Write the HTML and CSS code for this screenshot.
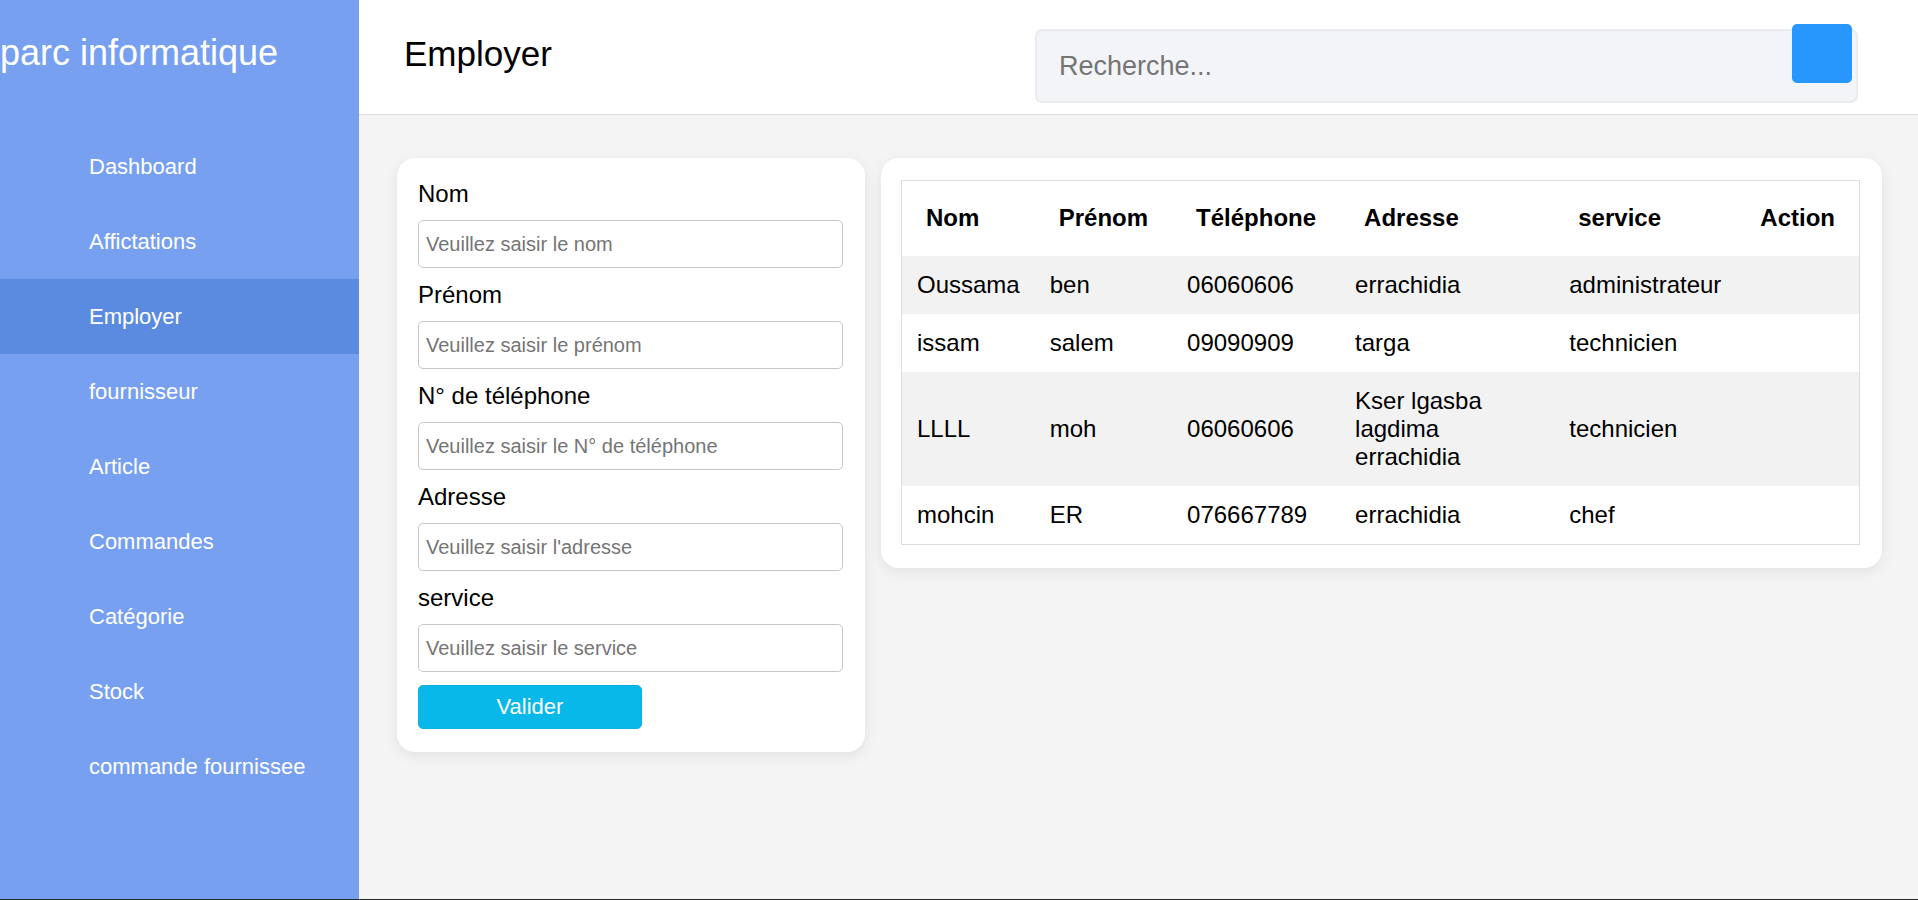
FILE: index.html
```html
<!DOCTYPE html>
<html lang="fr">
<head>
<meta charset="utf-8">
<title>Employer</title>
<link rel="stylesheet" href="styles.css">
</head>
<body>
<div class="app">
  <aside class="sidebar">
    <h1 class="brand">parc informatique</h1>
    <ul class="nav">
      <li><a href="#">Dashboard</a></li>
      <li><a href="#">Affictations</a></li>
      <li class="active"><a href="#">Employer</a></li>
      <li><a href="#">fournisseur</a></li>
      <li><a href="#">Article</a></li>
      <li><a href="#">Commandes</a></li>
      <li><a href="#">Catégorie</a></li>
      <li><a href="#">Stock</a></li>
      <li><a href="#">commande fournissee</a></li>
    </ul>
  </aside>
  <div class="main">
    <header class="topbar">
      <h2 class="page-title">Employer</h2>
      <div class="search">
        <input type="text" class="search-input" placeholder="Recherche...">
        <button class="search-btn" type="button"></button>
      </div>
    </header>
    <div class="content">
      <form class="card form-card">
        <label class="field-label">Nom</label>
        <input class="field-input" type="text" placeholder="Veuillez saisir le nom">
        <label class="field-label">Prénom</label>
        <input class="field-input" type="text" placeholder="Veuillez saisir le prénom">
        <label class="field-label">N° de téléphone</label>
        <input class="field-input" type="text" placeholder="Veuillez saisir le N° de téléphone">
        <label class="field-label">Adresse</label>
        <input class="field-input" type="text" placeholder="Veuillez saisir l'adresse">
        <label class="field-label">service</label>
        <input class="field-input" type="text" placeholder="Veuillez saisir le service">
        <button class="submit-btn" type="button">Valider</button>
      </form>
      <div class="card table-card">
        <table class="emp-table">
          <thead>
            <tr><th>Nom</th><th>Prénom</th><th>Téléphone</th><th>Adresse</th><th>service</th><th>Action</th></tr>
          </thead>
          <tbody>
            <tr><td>Oussama</td><td>ben</td><td>06060606</td><td>errachidia</td><td>administrateur</td><td></td></tr>
            <tr><td>issam</td><td>salem</td><td>09090909</td><td>targa</td><td>technicien</td><td></td></tr>
            <tr><td>LLLL</td><td>moh</td><td>06060606</td><td>Kser lgasba lagdima errachidia</td><td>technicien</td><td></td></tr>
            <tr><td>mohcin</td><td>ER</td><td>076667789</td><td>errachidia</td><td>chef</td><td></td></tr>
          </tbody>
        </table>
      </div>
    </div>
  </div>
</div>
</body>
</html>
```
FILE: styles.css
```css
* { box-sizing: border-box; }
html, body { margin: 0; padding: 0; }
body {
  font-family: "Liberation Sans", Arial, sans-serif;
  color: #000;
  background: #f4f4f4;
  overflow: hidden;
}
.app {
  display: flex;
  height: 900px;
  border-bottom: 1px solid #2a2a2a;
}
.sidebar {
  width: 359px;
  flex: none;
  background: #78a0f0;
  overflow: hidden;
}
.brand {
  margin: 0;
  padding-top: 32px;
  font-size: 36px;
  line-height: 41px;
  font-weight: normal;
  color: #fff;
  white-space: nowrap;
}
.nav {
  list-style: none;
  margin: 56px 0 0;
  padding: 0;
}
.nav li a {
  display: block;
  height: 75px;
  line-height: 75px;
  padding-left: 89px;
  font-size: 22px;
  color: #fff;
  text-decoration: none;
  white-space: nowrap;
}
.nav li.active a { background: #5b8be0; }
.main {
  flex: 1;
  display: flex;
  flex-direction: column;
  min-width: 0;
}
.topbar {
  height: 115px;
  flex: none;
  background: #fff;
  border-bottom: 1px solid #dcdcdc;
  display: flex;
  justify-content: space-between;
  align-items: flex-start;
  padding: 0 60px 0 45px;
}
.page-title {
  margin: 34px 0 0;
  font-size: 35px;
  line-height: 40px;
  font-weight: normal;
}
.search {
  position: relative;
  margin-top: 29px;
  width: 823px;
  height: 74px;
}
.search-input {
  width: 100%;
  height: 100%;
  background: #f3f4f8;
  border: 2px solid #ebecef;
  border-radius: 7px;
  padding: 0 22px;
  font-family: "Liberation Sans", Arial, sans-serif;
  font-size: 27px;
  color: #333;
  outline: none;
}
.search-input::placeholder { color: #757575; }
.search-btn {
  position: absolute;
  right: 6px;
  top: -5px;
  width: 60px;
  height: 59px;
  border: none;
  border-radius: 5px;
  background: #2797fe;
  padding: 0;
}
.content {
  flex: 1;
  display: flex;
  align-items: flex-start;
  gap: 16px;
  padding: 43px 36px 0 38px;
}
.card {
  background: #fff;
  border-radius: 18px;
  box-shadow: 0 4px 14px rgba(0, 0, 0, 0.08);
}
.form-card {
  width: 468px;
  flex: none;
  display: flex;
  flex-direction: column;
  align-items: flex-start;
  padding: 22px 22px 23px 21px;
  margin: 0;
}
.field-label {
  display: block;
  font-size: 24px;
  line-height: 28px;
}
.field-input {
  width: 425px;
  height: 48px;
  margin: 12px 0 13px;
  border: 1px solid #c6c6c6;
  border-radius: 5px;
  padding: 0 7px;
  font-family: "Liberation Sans", Arial, sans-serif;
  font-size: 20px;
  background: #fff;
}
.field-input::placeholder { color: #757575; }
.submit-btn {
  width: 224px;
  height: 44px;
  border: 1px solid #0bb1e0;
  border-radius: 5px;
  background: #08b8e8;
  color: #fff;
  font-family: "Liberation Sans", Arial, sans-serif;
  font-size: 22px;
  padding: 0;
}
.table-card {
  flex: 1;
  min-width: 0;
  padding: 22px 22px 23px 20px;
}
.emp-table {
  width: 100%;
  border-collapse: collapse;
  border: 1px solid #dddddd;
}
.emp-table th {
  text-align: left;
  font-weight: bold;
  font-size: 24px;
  line-height: 28px;
  padding: 23px 24px 24px;
  white-space: nowrap;
}
.emp-table td {
  font-size: 24px;
  line-height: 28px;
  padding: 15px;
}
.emp-table tbody tr:nth-child(odd) { background: #f2f2f2; }
.emp-table tbody tr:nth-child(even) { background: #fff; }
```
